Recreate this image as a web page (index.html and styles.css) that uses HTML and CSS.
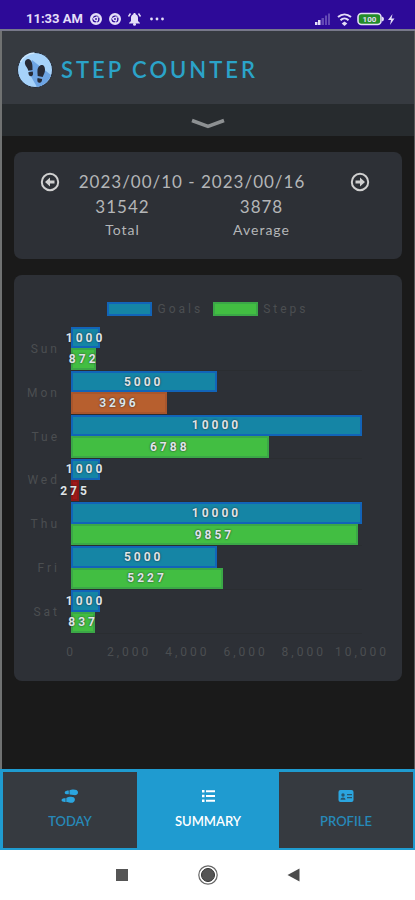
FILE: index.html
```html
<!DOCTYPE html>
<html lang="en">
<head>
<meta charset="utf-8">
<meta name="viewport" content="width=device-width, initial-scale=1">
<title>Step Counter</title>
<link rel="stylesheet" href="styles.css">
</head>
<body>
<div class="status">
  <span class="clock">11:33 AM</span>
  <svg class="status-left" width="76" height="14" viewBox="0 0 76 14">
    <g fill="none" stroke="#e4def8">
      <circle cx="6" cy="7" r="4.8" stroke-width="2.400"/><circle cx="6" cy="7" r="1.6" stroke-width="1.4"/>
      <path d="M6 5h5M4.3 8L2 4.2M7.6 8.2L5.4 12" stroke-width="1"/>
      <circle cx="25" cy="7" r="4.8" stroke-width="2.400"/><circle cx="25" cy="7" r="1.6" stroke-width="1.4"/>
      <path d="M25 5h5M23.300 8L21 4.200M26.600 8.200L24.400 12" stroke-width="1"/>
      <path d="M38.500 4.500l2-3M50.500 4.500l-2-3" stroke-width="1.400"/>
    </g>
    <g fill="#e4def8">
      <path d="M44.500 1c1 0 1.200.7 1.200 1.300C47.500 3 48 4.500 48 6v3l2 2v.5H39V11l2-2V6c0-1.500.6-3 2.300-3.700 0-.6.3-1.300 1.200-1.300z"/><circle cx="44.500" cy="12.200" r="1.500"/>
      <circle cx="61.500" cy="7" r="1.400"/><circle cx="67" cy="7" r="1.400"/><circle cx="72.500" cy="7" r="1.400"/>
    </g>
  </svg>
  <svg class="status-right" width="82" height="14" viewBox="0 0 82 14">
    <g fill="#e4def8">
      <path d="M1 10h2.500v3H1zM4 8h2.500v5H4z"/><path opacity=".3" d="M7.500 6H10v7H7.500zM11 3.500h2V13h-2zM14 1.500h2V13h-2z"/>
      <path d="M30.500 9.500l2.800 2-2.800 2.500-2.800-2.500z"/>
      <path d="M78.500 2l-4.500 6h3l-1 5 4.500-6.500h-3z"/>
    </g>
    <g fill="none" stroke="#e4def8" stroke-width="2"><path d="M24 5c4-3.500 9-3.500 13 0"/><path d="M26.500 8.200c2.300-2.200 5.700-2.200 8 0"/></g>
    <rect x="44" y="1.500" width="23" height="11" rx="3.500" fill="#238c2a" stroke="#e4def8" stroke-width="1.600"/>
    <path d="M68 4.500q2 .5 2 2.500t-2 2.500z" fill="#e4def8"/>
    <text class="charge" x="55.500" y="10" text-anchor="middle">100</text>
  </svg>
</div>

<div class="app">
  <header class="header">
    <svg width="36" height="36" viewBox="0 0 36 36">
      <circle cx="18" cy="18" r="17.500" fill="#a6d2fa" stroke="#252a35"/>
      <path d="M15 8l19 15a17 17 0 0 1-14 12l-8-14z" fill="#6da4e4"/>
      <path d="M3.500 10a17 17 0 0 1 14-9" stroke="#cde8ff" stroke-width="1.500" fill="none"/>
      <g fill="#272a36">
        <path d="M9 8c2.300-2 4.700-.5 5.800 2.500 1 3 .6 5.500.7 7.500l-4.200.8C11 16 8.500 14.500 8 12c-.3-1.500 0-3 1-4z"/>
        <path d="M11.300 20.300l4.400-.8c.8 2.500.3 4.500-1.500 4.800-1.800.2-2.700-1.500-2.900-4z"/>
        <path d="M25.500 13c-2.500-.6-4.700 2-5 5-.2 2.600.2 4.500.2 6l5 1c.6-2 2.500-4 2.300-7.500-.1-2.500-1-4.100-2.500-4.500z"/>
        <path d="M20.600 26l4.500 1c0 2.500-1 4-3 3.700-1.800-.4-2.200-2.200-1.500-4.700z"/>
      </g>
    </svg>
    <h1>STEP COUNTER</h1>
  </header>
  <button class="expand" aria-label="Expand">
    <svg width="34" height="12" viewBox="0 0 34 12"><path d="M1 2.500l16 6 16-6" fill="none" stroke="#8d9092" stroke-width="3.500"/></svg>
  </button>

  <main class="content">
    <section class="card summary">
      <button class="arrow" aria-label="Previous week">
        <svg width="20" height="20" viewBox="0 0 20 20"><circle cx="10" cy="10" r="8.200" fill="none" stroke="#d0d0d0" stroke-width="2"/><path d="M5 10l5-4.500v3h4.500v3H10v3z" fill="#d0d0d0"/></svg>
      </button>
      <div class="totals">
        <div class="range">2023/00/10 - 2023/00/16</div>
        <div class="stat"><b>31542</b><span>Total</span></div>
        <div class="stat"><b>3878</b><span>Average</span></div>
      </div>
      <button class="arrow next" aria-label="Next week">
        <svg width="20" height="20" viewBox="0 0 20 20"><circle cx="10" cy="10" r="8.200" fill="none" stroke="#d0d0d0" stroke-width="2"/><path d="M15 10l-5-4.500v3H5.500v3H10v3z" fill="#d0d0d0"/></svg>
      </button>
    </section>

    <section class="card chart">
      <div class="legend">
        <span class="key"><i class="swatch goal"></i>Goals</span>
        <span class="key"><i class="swatch good"></i>Steps</span>
      </div>
      <div class="plot">
        <div class="day">Sun</div><div class="bars"><div class="bar goal" style="width:10%"><span>1000</span></div><div class="bar good" style="width:8.720%"><span>872</span></div></div>
        <div class="day">Mon</div><div class="bars"><div class="bar goal" style="width:50%"><span>5000</span></div><div class="bar fair" style="width:32.960%"><span>3296</span></div></div>
        <div class="day">Tue</div><div class="bars"><div class="bar goal" style="width:100%"><span>10000</span></div><div class="bar good" style="width:67.880%"><span>6788</span></div></div>
        <div class="day">Wed</div><div class="bars"><div class="bar goal" style="width:10%"><span>1000</span></div><div class="bar poor" style="width:2.750%"><span>275</span></div></div>
        <div class="day">Thu</div><div class="bars"><div class="bar goal" style="width:100%"><span>10000</span></div><div class="bar good" style="width:98.570%"><span>9857</span></div></div>
        <div class="day">Fri</div><div class="bars"><div class="bar goal" style="width:50%"><span>5000</span></div><div class="bar good" style="width:52.270%"><span>5227</span></div></div>
        <div class="day">Sat</div><div class="bars"><div class="bar goal" style="width:10%"><span>1000</span></div><div class="bar good" style="width:8.370%"><span>837</span></div></div>
      </div>
      <div class="axis"><span>0</span><span>2,000</span><span>4,000</span><span>6,000</span><span>8,000</span><span>10,000</span></div>
    </section>
  </main>

  <nav class="tabs">
    <a class="tab" href="#today">
      <svg width="18" height="14" viewBox="0 0 18 14"><g fill="#2ba5df"><path d="M8.500 1.300C10.500 0 16.800-.3 17 3c.1 3-2.500 3.500-4.500 3-1.500-.4-2.600-.6-4-.6zM7.800 1.500v3.700C6 5.500 3.700 5.200 3.700 3.400c0-1.500 2.300-1.900 4.100-1.900z"/><path d="M5.300 9C7.300 7.600 13.500 6.700 13.900 10.200c.2 3.200-2.700 4-4.800 3.500-1.400-.3-2.300-.6-3.800-.6zM4.600 9.200v3.700c-1.800.2-4.100-.1-4.100-1.800s2.300-1.900 4.100-1.900z"/></g></svg>
      TODAY</a>
    <a class="tab active" href="#summary" aria-current="page">
      <svg width="14" height="14" viewBox="0 0 14 14"><path d="M1 1h2.500v2.500H1zM1 5.700h2.500v2.500H1zM1 10.400h2.500v2.500H1zM5 1.300h9v2H5zM5 6h9v2H5zM5 10.700h9v2H5z" fill="#fff"/></svg>
      SUMMARY</a>
    <a class="tab" href="#profile">
      <svg width="16" height="14" viewBox="0 0 16 14"><rect x=".5" y="1" width="15" height="12" rx="2" fill="#2ba5df"/><g fill="#28556c"><circle cx="5" cy="6" r="1.700"/><path d="M2.500 10.800c0-3 5-3 5 0zM9 5h5v1.300H9zM9 8h5v1.300H9z"/></g></svg>
      PROFILE</a>
  </nav>
</div>

<div class="system">
  <button aria-label="Recent apps"><svg width="22" height="22" viewBox="0 0 22 22"><path d="M5 5h12v12H5z" fill="#555"/></svg></button>
  <button aria-label="Home"><svg width="22" height="22" viewBox="0 0 22 22"><circle cx="11" cy="11" r="9.200" fill="#fff" stroke="#666" stroke-width="1.200"/><circle cx="11" cy="11" r="6.500" fill="#555" stroke="#333"/></svg></button>
  <button aria-label="Back"><svg width="22" height="22" viewBox="0 0 22 22"><path d="M16.500 4.500v13L4.500 11z" fill="#4c4c4c"/></svg></button>
</div>
</body>
</html>
```
FILE: styles.css
```css
* { box-sizing: border-box; }

body {
  margin: 0;
  min-height: 100vh;
  display: flex;
  flex-direction: column;
  background: #fff;
  color: #b4b6b8;
  font-family: Lato, sans-serif;
}

button {
  padding: 0;
  border: 0;
  background: none;
  cursor: pointer;
}

svg { display: block; flex: none; }

.status {
  display: flex;
  align-items: center;
  height: 29px;
  padding: 9px 19px 0 26px;
  background: #2d0a98;
  color: #e4def8;
}
.clock {
  font: 700 13px/20px Roboto, sans-serif;
  white-space: nowrap;
}
.status-left { margin-left: 7px; }
.status-right { margin-left: auto; }
.charge {
  font: 700 8px Roboto, sans-serif;
  fill: #e4def8;
}

.app {
  flex: 1;
  display: flex;
  flex-direction: column;
  border-top: 2px solid #77788a;
  background: #1a1a1a;
}

.header {
  display: flex;
  align-items: center;
  gap: 8px;
  height: 73px;
  padding: 4px 15px 0;
  background: #363a40;
}
.header, .expand, .content {
  border-left: 2px solid #707272;
  border-right: 1px solid #555757;
}
h1 {
  margin: 0;
  color: #2ba3c9;
  font-size: 22px;
  line-height: 28px;
  font-weight: 600;
  letter-spacing: 3px;
}
.expand {
  display: flex;
  align-items: center;
  justify-content: center;
  height: 32px;
  padding-top: 8px;
  background: #272b2e;
}

.content {
  flex: 1;
  display: flex;
  flex-direction: column;
  gap: 16px;
  padding: 16px 12px;
}
.card {
  border-radius: 8px;
  background: #2d3036;
}

.summary {
  display: flex;
  align-items: flex-start;
  padding: 17px 32px 18px 26px;
}
.arrow { margin-top: 3px; }
.next { margin-left: 40px; }
.totals {
  flex: 1;
  margin-left: 14px;
  display: grid;
  grid-template-columns: 1fr 1fr;
  column-gap: 42px;
  letter-spacing: 1px;
  text-align: center;
}
.range {
  grid-column: 1 / -1;
  display: flex;
  justify-content: center;
  white-space: nowrap;
}
.range, .stat b {
  font-size: 17px;
  line-height: 25px;
  font-weight: 400;
}
.stat {
  display: flex;
  flex-direction: column;
}
.stat span {
  font-size: 14px;
  line-height: 22px;
}

.chart {
  padding: 27px 40px 21px 0;
  color: #4b4e51;
  font: 12px/16px Roboto, sans-serif;
  letter-spacing: 3px;
}
.legend {
  display: flex;
  justify-content: center;
  gap: 10px;
  margin-right: -40px;
}
.key {
  display: flex;
  align-items: center;
  gap: 5px;
  height: 14px;
}
.swatch {
  width: 45px;
  height: 14px;
}
.plot {
  display: grid;
  grid-template-columns: 46px 1fr;
  grid-template-rows: repeat(7, 1fr);
  column-gap: 11px;
  height: 307px;
  margin-top: 11px;
}
.day {
  align-self: center;
  text-align: right;
}
.bars {
  display: grid;
  grid-template-rows: 1fr 1fr;
  border-bottom: 1px solid #2a2d31;
}
.bar {
  display: flex;
  align-items: center;
  justify-content: center;
  color: #dfe4e8;
  font-weight: 700;
  text-shadow: 0 0 2px #222;
}
.bar, .swatch { border: 2px solid; }
.goal { background: #1585a5; border-color: #1264b8; }
.good { background: #42be42; border-color: #3ba747; }
.fair { background: #b75f2e; border-color: #a8562d; }
.poor { background: #a01818; border-color: #8c1717; }

.axis {
  display: flex;
  justify-content: space-between;
  margin: 10px 0 0 57px;
}
.axis span {
  display: flex;
  justify-content: center;
  width: 0;
}

.tabs {
  display: grid;
  grid-template-columns: 17fr 18fr 17fr;
  padding: 3px 2px 2px 3px;
  background: #1f9bd0;
}
.tab {
  display: flex;
  flex-direction: column;
  align-items: center;
  gap: 9px;
  padding: 17px 0 18px;
  background: #363a40;
  color: #2789b8;
  font-size: 13px;
  line-height: 18px;
  font-weight: 600;
  text-decoration: none;
}
.tab.active {
  background: #1f9bd0;
  color: #fff;
}

.system {
  display: flex;
  align-items: center;
  justify-content: center;
  gap: 64px;
  height: 50px;
}
```
